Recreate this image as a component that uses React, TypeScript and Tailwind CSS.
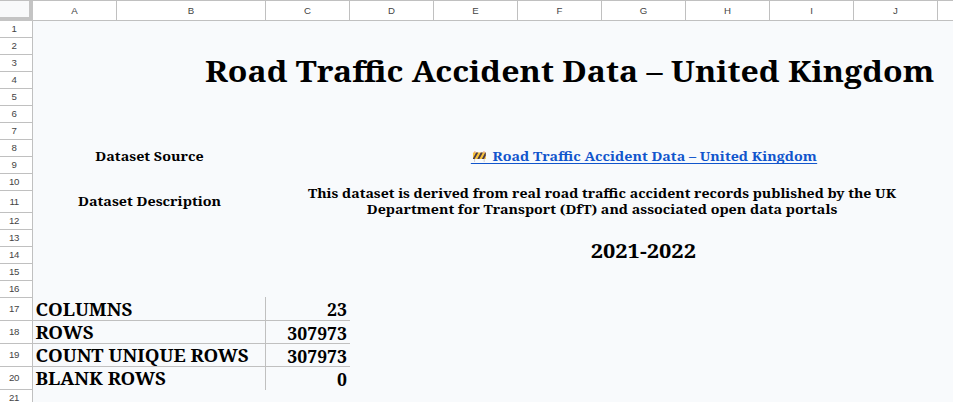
const columns = [
  { name: "A", width: "w-[84px]" },
  { name: "B", width: "w-[149px]" },
  { name: "C", width: "w-[84px]" },
  { name: "D", width: "w-[84px]" },
  { name: "E", width: "w-[84px]" },
  { name: "F", width: "w-[84px]" },
  { name: "G", width: "w-[84px]" },
  { name: "H", width: "w-[84px]" },
  { name: "I", width: "w-[84px]" },
  { name: "J", width: "w-[84px]" },
  { name: "", width: "w-[84px]" },
];

const rowHeight = (n: number) =>
  n === 11 ? "h-[22px]" : n >= 17 && n <= 20 ? "h-[23px]" : "h-[17px]";

const stats = [
  { label: "COLUMNS", value: "23" },
  { label: "ROWS", value: "307973" },
  { label: "COUNT UNIQUE ROWS", value: "307973" },
  { label: "BLANK ROWS", value: "0" },
];

function BarrierIcon() {
  return (
    <svg width="14" height="12" viewBox="0 0 14 12" className="mt-px mr-[5px] ml-px">
      <path d="M2.5 1v10M11.5 1v10" stroke="#d8d3d0" strokeWidth="1" />
      <rect x="1" y="1.500" width="12" height="6.500" fill="#f8c23a" />
      <path d="M1 7.500L4 1.500h2L2.500 8H1zM5 8l3.300-6.500h2L7 8zM9.300 8l3.200-6.500h.5v3L11.300 8z" fill="#4a3a4c" />
      <path d="M2 .5h1.500v1H2zM10.500 .5H12v1h-1.500z" fill="#ef8a62" />
    </svg>
  );
}

export default function App() {
  return (
    <div className="h-[402px] w-[953px] overflow-hidden bg-[#f8fafc] text-black">
      <div className="flex h-[21px] w-[1100px] border-t border-b border-[#c0c0c0] bg-white font-['Liberation_Sans',Arial,sans-serif] text-[9.67px] text-[#444]">
        <div className="-mb-px h-[20px] w-[33px] shrink-0 border-r-4 border-b-4 border-[#c4c4c4] bg-[#f8f9fa]" />
        {columns.map((c, i) => (
          <div key={i} className={`${c.width} flex shrink-0 items-center justify-center border-r border-[#c0c0c0] pt-px`}>
            {c.name}
          </div>
        ))}
      </div>
      <div className="flex w-[1200px]">
        <div className="w-[33px] shrink-0 border-r border-[#c0c0c0] bg-white font-['Liberation_Sans',Arial,sans-serif] text-[9.67px] leading-[14px] tracking-[-0.4px] text-[#444]">
          {Array.from({ length: 21 }, (_, i) => i + 1).map((n) => (
            <div key={n} className={`${rowHeight(n)} flex items-center border-b border-[#c0c0c0]`}>
              <span className="w-[28px] text-center">{n}</span>
            </div>
          ))}
        </div>
        <div className="w-[1073px] shrink-0 font-['Noto_Serif','DejaVu_Serif_Condensed','DejaVu_Serif',serif] font-bold whitespace-nowrap">
          <h1 className="flex h-[102px] items-center justify-center text-[29.33px]">
            <span className="scale-x-[1.093]">Road Traffic Accident Data – United Kingdom</span>
          </h1>
          <div className="mt-[17px] flex h-[34px] items-center text-[13.33px]">
            <div className="w-[233px] scale-x-[1.074] text-center">Dataset Source</div>
            <div className="flex w-[756px] scale-x-[1.069] justify-center">
              <a className="flex h-[14px] items-start border-b border-[#1155cc] leading-[12px] text-[#1155cc]">
                <BarrierIcon />
                <span>Road Traffic Accident Data – United Kingdom</span>
              </a>
            </div>
          </div>
          <div className="flex h-[54px] items-center text-[13.33px] leading-[16px]">
            <div className="w-[233px] scale-x-[1.075] text-center">Dataset Description</div>
            <div className="w-[672px]">
              <div className="flex scale-x-[1.06] justify-center">
                <span>This dataset is derived from real road traffic accident records published by the UK</span>
              </div>
              <div className="flex scale-x-[1.068] justify-center">
                <span>Department for Transport (DfT) and associated open data portals</span>
              </div>
            </div>
          </div>
          <div className="ml-[233px] flex h-[45px] w-[755px] items-center justify-center text-[20px]">
            <span className="scale-x-[1.09]">2021-2022</span>
          </div>
          <div className="mt-[24px] text-[17.33px] leading-[22px]">
            {stats.map((s, i) => (
              <div key={s.label} className={`${i === 0 ? "h-[24px]" : "h-[23px]"} flex w-[317px] border-[#c0c0c0] ${i < 3 ? "border-b" : ""}`}>
                <div className={`w-[233px] border-r border-[#c0c0c0] pl-[2px] ${i === 0 ? "pt-px" : ""}`}>
                  <div className="origin-left translate-x-[0.4px] scale-x-[1.08]">{s.label}</div>
                </div>
                <div className="w-[84px] pt-px pr-[3px] text-right">
                  <div className="origin-right scale-x-[1.015]">{s.value}</div>
                </div>
              </div>
            ))}
          </div>
        </div>
      </div>
    </div>
  );
}
